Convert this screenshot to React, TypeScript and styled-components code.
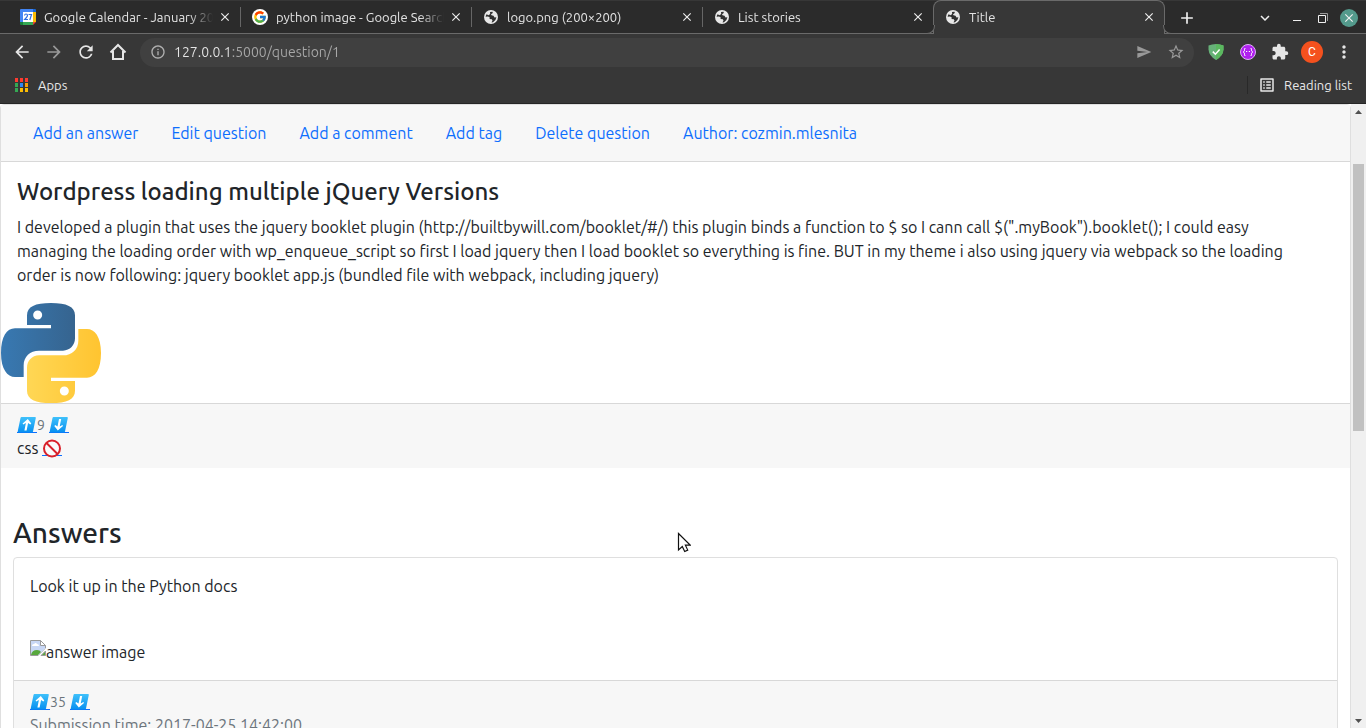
import React from "react";
import styled, { createGlobalStyle, css } from "styled-components";
import {
  MdAdd, MdArrowBack, MdArrowForward, MdClose, MdExpandMore, MdExtension, MdInfoOutline,
  MdListAlt, MdMoreVert, MdRefresh, MdSend, MdStarBorder,
} from "react-icons/md";
import { FcGoogle } from "react-icons/fc";

const GlobalStyle = createGlobalStyle`
  * { box-sizing: border-box; }
  body {
    margin: 0;
    background: #fff;
    color: #212529;
    font: 16px/24px Ubuntu, "Noto Sans", sans-serif;
  }
  button { border: 0; padding: 0; background: none; color: inherit; font: inherit; cursor: pointer; }
  h1, h2, p { margin: 0; }
  svg { display: block; flex: none; }
`;

const Window = styled.div`
  display: flex;
  flex-direction: column;
  height: 100vh;
  overflow: hidden;
`;

/* ---------- browser frame ---------- */

const TabStrip = styled.div`
  display: flex;
  flex: none;
  height: 34px;
  padding-left: 9px;
  background: #2b2b2b;
  border-top: 1px solid #373737;
  box-shadow: inset 0 -1px #6a6a6a;
  color: #e3e3e3;
  font-size: 13px;
`;

const flare = css`
  content: "";
  position: absolute;
  bottom: 0;
  width: 8px;
  height: 8px;
  background: #2b2b2b;
  border-bottom: 1px solid #6a6a6a;
`;

const Tab = styled.div<{ $active?: boolean; $first?: boolean }>`
  position: relative;
  display: flex;
  align-items: center;
  flex: 0 1 231px;
  min-width: 0;
  padding: 0 8px 2px ${({ $first }) => ($first ? 11 : 12)}px;
  ${({ $active, $first }) =>
    $active
      ? css`
          margin-top: -1px;
          flex-basis: 232px;
          padding: 0 8px 1px 11px;
          background: #373737;
          border: 1px solid #6a6a6a;
          border-bottom: 0;
          border-radius: 8px 8px 0 0;
          &::before { ${flare} left: -8px; border-right: 1px solid #6a6a6a; border-bottom-right-radius: 8px; }
          &::after { ${flare} right: -8px; border-left: 1px solid #6a6a6a; border-bottom-left-radius: 8px; }
        `
      : css`
          &::before {
            content: "";
            position: absolute;
            left: 0;
            top: 6px;
            width: 1px;
            height: 20px;
            background: ${$first ? "transparent" : "#666"};
          }
        `}
`;

const TabTitle = styled.span`
  flex: 1;
  min-width: 0;
  margin: 0 5px 0 8px;
  overflow: hidden;
  white-space: nowrap;
  mask-image: linear-gradient(to right, #000 calc(100% - 24px), transparent);
`;

const TabClose = styled.button`
  display: flex;
  color: #eee;
`;

const WindowControls = styled.div`
  display: flex;
  align-items: center;
  margin-left: auto;
  padding-right: 8px;
  color: #e3e3e3;
`;

const StripButton = styled.button<{ $width: number }>`
  display: flex;
  align-items: center;
  justify-content: center;
  width: ${({ $width }) => $width}px;
  color: #f0f0f0;
`;

const CloseWindow = styled(StripButton)`
  height: 18px;
  margin-left: 6px;
  border-radius: 9px;
  background: #549a8c;
`;

const Toolbar = styled.div`
  display: flex;
  align-items: center;
  flex: none;
  height: 36px;
  padding: 0 6px;
  background: #373737;
`;

const ToolButton = styled.button<{ $dim?: boolean }>`
  display: flex;
  align-items: center;
  justify-content: center;
  flex: none;
  width: 32px;
  height: 28px;
  color: ${({ $dim }) => ($dim ? "#999" : "#e6e6e6")};
`;

const AddressBar = styled.div`
  display: flex;
  align-items: center;
  flex: 1;
  height: 29px;
  margin: 0 6px;
  padding: 0 2px 0 10px;
  border-radius: 15px;
  background: #404040;
  color: #b0b0b0;
`;

const AddressInput = styled.input`
  flex: 1;
  min-width: 0;
  margin-left: 8px;
  padding: 0;
  border: 0;
  outline: 0;
  font: 14px/20px Ubuntu, "Noto Sans", sans-serif;
  color: transparent;
  background: linear-gradient(to right, #e6e6e6 57px, #a8a8a8 57px);
  background-clip: text;
  caret-color: #e6e6e6;
`;

const Avatar = styled.span`
  width: 22px;
  border-radius: 11px;
  background: #f4511e;
  color: #fff;
  font: 12px/22px Roboto, sans-serif;
  text-align: center;
`;

const BookmarksBar = styled.div`
  display: flex;
  align-items: center;
  justify-content: space-between;
  flex: none;
  height: 34px;
  padding: 0 14px 4px;
  background: #373737;
  border-bottom: 1px solid #262626;
  color: #e8e8e8;
  font-size: 13px;
  line-height: 16px;
`;

const Bookmark = styled.button<{ $divided?: boolean }>`
  display: flex;
  align-items: center;
  gap: 8px;
  ${({ $divided }) => $divided && "padding-left: 10px; border-left: 1px solid #292929;"}
`;

/* ---------- web page ---------- */

const Viewport = styled.div`
  display: flex;
  flex: 1;
  min-height: 0;
`;

const Page = styled.main`
  flex: 1;
  min-width: 0;
  overflow: hidden;
`;

const Card = styled.article`
  border: 1px solid #dfdfdf;
  border-radius: 4px;
  background: #fff;
`;

const CardHeader = styled.nav`
  display: flex;
  gap: 33px;
  padding: 16px 32px;
  background: #f7f7f7;
  border-bottom: 1px solid #d8d8d8;
`;

const NavLink = styled.a`
  color: #0d6efd;
  text-decoration: none;
`;

const CardBody = styled.div`
  padding: 16px;
`;

const QuestionTitle = styled.h1`
  margin-bottom: 10px;
  font-size: 24px;
  line-height: 27px;
  font-weight: 500;
`;

const QuestionText = styled.p`
  padding-right: 16px;
`;

const CardFooter = styled.div`
  padding: 8px 16px;
  background: #f7f7f7;
  border-top: 1px solid #d8d8d8;
  color: #6c757d;
`;

const VoteRow = styled.div`
  display: flex;
  align-items: center;
  padding-top: 2px;
  font-size: 14px;
  line-height: 22px;
`;

const VoteLink = styled.a<{ $spaced?: boolean }>`
  margin-left: ${({ $spaced }) => ($spaced ? 4 : 0)}px;
`;

const TagRow = styled.div`
  display: flex;
  align-items: center;
  gap: 4px;
  color: #212529;
`;

const Answers = styled.section`
  padding: 48px 12px 16px;
`;

const AnswersTitle = styled.h2`
  margin-bottom: 7px;
  font-size: 28px;
  line-height: 34px;
  font-weight: 500;
`;

const AnswerImage = styled.div`
  display: flex;
  margin-top: 42px;
`;

const Scrollbar = styled.div`
  display: flex;
  flex-direction: column;
  align-items: center;
  flex: none;
  width: 15px;
  padding: 6px 0 5px;
  background: #f0f0f0;
`;

const Thumb = styled.div`
  width: 11px;
  height: 267px;
  margin: 50px 0 auto;
  background: #c1c1c1;
`;

const Pointer = styled.svg`
  position: absolute;
  left: 677px;
  top: 532px;
`;

/* ---------- drawings ---------- */

const CalendarIcon = () => (
  <svg width="16" height="16" viewBox="0 0 16 16">
    <path d="M0 1Q0 0 1 0h12v3H3v10H0z" fill="#4285f4" />
    <path d="M13 0h2q1 0 1 1v2h-3z" fill="#1967d2" />
    <path d="M13 3h3v10h-3z" fill="#fbbc04" />
    <path d="M3 13h10v3H3z" fill="#34a853" />
    <path d="M0 13h3v3H1q-1 0-1-1z" fill="#188038" />
    <path d="M13 13h3l-3 3z" fill="#ea4335" />
    <path d="M3 3h10v10H3z" fill="#fff" />
    <path d="M4.500 6.500q.3-1.500 1.500-1.500 1.500 0 1.500 1.500Q7.500 7.500 4.700 10.500H8M8.500 5.500h3L9.800 11" fill="none" stroke="#2f6fe0" strokeWidth="1.200" />
  </svg>
);

const GlobeIcon = () => (
  <svg width="16" height="16" viewBox="0 0 16 16">
    <circle cx="8" cy="8" r="7" fill="#e8e8e8" />
    <path
      d="M7 3L9.500 2.800 9.800 4 8 5.200 8.500 6.300 10.500 6.800 11.500 8.500 13.400 8.300Q13 11.800 10 13.200L8.500 13.500 9.500 11.500 8.800 10.200 6.500 10 6.800 8.500 5 7.500 2.600 7.800Q2.800 6.200 3.600 5.200L5.500 6.200 7.200 5z"
      fill="#303030"
    />
  </svg>
);

const HomeIcon = () => (
  <svg width="18" height="18" viewBox="0 0 18 18" fill="none" stroke="#e6e6e6" strokeWidth="2">
    <path d="M1.500 9.500L9 2l7.500 7.500M4 8v8h3.500M14 8v8h-3.500M4 16h10" />
  </svg>
);

const GoogleBadge = styled.span`
  display: flex;
  padding: 1px;
  border-radius: 8px;
  background: #fff;
`;

const AppsIcon = () => {
  const colors = ["#ff3b30", "#ff3b30", "#ff3b30", "#34a853", "#2f86f6", "#fb9c04", "#34a853", "#fbbc04", "#fbbc04"];
  return (
    <svg width="16" height="16" viewBox="0 0 16 16">
      {colors.map((c, i) => (
        <rect key={i} x={1 + (i % 3) * 5} y={1 + Math.floor(i / 3) * 5} width="3" height="4" fill={c} />
      ))}
    </svg>
  );
};

const MinimizeIcon = () => (
  <svg width="10" height="12" viewBox="0 0 10 12"><path d="M1 8h8v1H1z" fill="#f0f0f0" /></svg>
);

const RestoreIcon = () => (
  <svg width="12" height="12" viewBox="0 0 12 12" fill="none">
    <path d="M1.500 3.500h7v7h-7z" stroke="#f0f0f0" />
    <path d="M3 1.500h7.500V9" stroke="#999" />
  </svg>
);

const ShieldIcon = () => (
  <svg width="16" height="16" viewBox="0 0 16 16">
    <path d="M8 0q4 0 7.500 1.500v4Q15 12 8 16 1 12 .5 5.500v-4Q4 0 8 0z" fill="#67b279" />
    <path d="M8 0q4 0 7.500 1.500v4Q15 12 8 16z" fill="#5bb85f" />
    <path d="M4.800 7.600l2.600 2.600 4.200-4.800" fill="none" stroke="#fff" strokeWidth="1.500" />
  </svg>
);

const BracesIcon = () => (
  <svg width="16" height="16" viewBox="0 0 16 16" fill="none">
    <circle cx="8" cy="8" r="7.500" fill="#b020f0" stroke="#ddb0f5" />
    <path d="M5.500 4.500h-1V7L3 8l1.500 1v2.500h1M10.500 4.500h1V7L13 8l-1.500 1v2.500h-1" stroke="#f0d8fb" />
    <path d="M6 7.500h1.200M8.800 7.500H10" stroke="#fff" />
  </svg>
);

const PythonLogo = () => {
  const half = "M153 39C105 39 81 50 81 76V105H153V115H45C20 115 3 140 3 189C3 238 22 261 45 261H71V226C71 200 90 182 117 182H189C210 182 225 165 225 145V76C225 50 200 39 153 39ZM113 61.500A13.500 13.500 0 1 1 113 88.500A13.500 13.500 0 1 1 113 61.500Z";
  return (
    <svg width="100" height="100" viewBox="3 39 300 300" role="img" aria-label="Python">
      <defs>
        <linearGradient id="blue"><stop stopColor="#3879b2" /><stop offset="1" stopColor="#36648f" /></linearGradient>
        <linearGradient id="yellow"><stop stopColor="#ffc430" /><stop offset="1" stopColor="#ffd755" /></linearGradient>
      </defs>
      <path d={half} fill="url(#blue)" />
      <path d={half} fill="url(#yellow)" transform="rotate(180 153 189)" />
    </svg>
  );
};

const ArrowEmoji = ({ down }: { down?: boolean }) => (
  <svg width="20" height="18" viewBox="0 0 20 18">
    <defs>
      <linearGradient id="sky" x2="0" y2="1"><stop stopColor="#3fc1fb" /><stop offset="1" stopColor="#078ff0" /></linearGradient>
    </defs>
    <path d="M0 16.500H20" stroke="#0d6efd" />
    <path d="M4.500 1H18q1 0 .8 1L16 15.500q-.2 1-1 1H1.500q-1 0-.8-1L3.500 2q.2-1 1-1z" fill="url(#sky)" />
    <g transform={down ? "rotate(180 9.800 8.800)" : undefined}>
      <path d="M10.800 3l3.500 4.500-1 1-2.200-1.500-1.500 7.500-2.200 0 1.500-7.500-2.700 1.500-.6-1z" fill="#fff" />
    </g>
  </svg>
);

const ProhibitedEmoji = () => (
  <svg width="20" height="20" viewBox="0 0 20 20" fill="none">
    <path d="M0 17.500H20" stroke="#0d6efd" />
    <circle cx="10" cy="10.500" r="8" fill="#fafafa" stroke="#d9202a" strokeWidth="2" />
    <path d="M4.500 5l11 11" stroke="#d9202a" strokeWidth="2" />
  </svg>
);

const BrokenImage = () => (
  <svg width="16" height="16" viewBox="0 0 16 16">
    <path d="M.5.500h10l5 5v3L8.500 15.500h-8z" fill="#c8d7f5" stroke="#9a9a9a" />
    <path d="M10.500.500v5h5z" fill="#fff" stroke="#9a9a9a" />
    <path d="M2 6q0-2 2-2 2-2 3 0 2 0 2 2z" fill="#fff" />
    <path d="M1 15q1-5 6-5 3 0 4 2l-3 3z" fill="#58a83d" />
    <path d="M16 8v2l-6 6H8z" fill="#fff" />
    <path d="M15.500 11v4.500H11z" fill="#58a83d" stroke="#9a9a9a" />
  </svg>
);

const Votes = ({ count }: { count: number }) => (
  <VoteRow>
    <VoteLink href="#up" aria-label="Vote up"><ArrowEmoji /></VoteLink>
    {count}
    <VoteLink href="#down" aria-label="Vote down" $spaced><ArrowEmoji down /></VoteLink>
  </VoteRow>
);

const tabs = [
  { title: "Google Calendar - January 2022", icon: <CalendarIcon /> },
  { title: "python image - Google Search", icon: <GoogleBadge><FcGoogle size={14} /></GoogleBadge> },
  { title: "logo.png (200×200)", icon: <GlobeIcon /> },
  { title: "List stories", icon: <GlobeIcon /> },
  { title: "Title", icon: <GlobeIcon />, active: true },
];

const links = ["Add an answer", "Edit question", "Add a comment", "Add tag", "Delete question", "Author: cozmin.mlesnita"];

export default function App() {
  return (
    <Window>
      <GlobalStyle />
      <TabStrip>
        {tabs.map((tab, i) => (
          <Tab key={tab.title} $active={tab.active} $first={i === 0}>
            {tab.icon}
            <TabTitle>{tab.title}</TabTitle>
            <TabClose aria-label={`Close ${tab.title}`}><MdClose size={14} /></TabClose>
          </Tab>
        ))}
        <StripButton $width={44} aria-label="New tab"><MdAdd size={20} /></StripButton>
        <WindowControls>
          <StripButton $width={34} aria-label="Search tabs"><MdExpandMore size={18} /></StripButton>
          <StripButton $width={30} aria-label="Minimize"><MinimizeIcon /></StripButton>
          <StripButton $width={22} aria-label="Restore"><RestoreIcon /></StripButton>
          <CloseWindow $width={18} aria-label="Close window"><MdClose size={14} /></CloseWindow>
        </WindowControls>
      </TabStrip>
      <Toolbar>
        <ToolButton aria-label="Back"><MdArrowBack size={20} /></ToolButton>
        <ToolButton aria-label="Forward" $dim><MdArrowForward size={20} /></ToolButton>
        <ToolButton aria-label="Reload"><MdRefresh size={20} /></ToolButton>
        <ToolButton aria-label="Home"><HomeIcon /></ToolButton>
        <AddressBar>
          <MdInfoOutline size={16} />
          <AddressInput aria-label="Address" defaultValue="127.0.0.1:5000/question/1" />
          <ToolButton aria-label="Send page" $dim><MdSend size={16} /></ToolButton>
          <ToolButton aria-label="Bookmark this page" $dim><MdStarBorder size={18} /></ToolButton>
        </AddressBar>
        <ToolButton aria-label="Ad blocker"><ShieldIcon /></ToolButton>
        <ToolButton aria-label="JSON viewer"><BracesIcon /></ToolButton>
        <ToolButton aria-label="Extensions"><MdExtension size={18} /></ToolButton>
        <ToolButton aria-label="Profile"><Avatar>C</Avatar></ToolButton>
        <ToolButton aria-label="Menu"><MdMoreVert size={20} /></ToolButton>
      </Toolbar>
      <BookmarksBar>
        <Bookmark><AppsIcon />Apps</Bookmark>
        <Bookmark $divided><MdListAlt size={18} />Reading list</Bookmark>
      </BookmarksBar>
      <Viewport>
        <Page>
          <Card>
            <CardHeader>
              {links.map((l) => <NavLink key={l} href="#">{l}</NavLink>)}
            </CardHeader>
            <CardBody>
              <QuestionTitle>Wordpress loading multiple jQuery Versions</QuestionTitle>
              <QuestionText>
                I developed a plugin that uses the jquery booklet plugin (http://builtbywill.com/booklet/#/) this
                plugin binds a function to $ so I cann call $(".myBook").booklet(); I could easy managing the loading
                order with wp_enqueue_script so first I load jquery then I load booklet so everything is fine. BUT in
                my theme i also using jquery via webpack so the loading order is now following: jquery booklet app.js
                (bundled file with webpack, including jquery)
              </QuestionText>
            </CardBody>
            <PythonLogo />
            <CardFooter>
              <Votes count={9} />
              <TagRow>css <a href="#remove" aria-label="Remove tag"><ProhibitedEmoji /></a></TagRow>
            </CardFooter>
            <Answers>
              <AnswersTitle>Answers</AnswersTitle>
              <Card>
                <CardBody>
                  <p>Look it up in the Python docs</p>
                  <AnswerImage><BrokenImage />answer image</AnswerImage>
                </CardBody>
                <CardFooter>
                  <Votes count={35} />
                  <p>Submission time: 2017-04-25 14:42:00</p>
                </CardFooter>
              </Card>
            </Answers>
          </Card>
        </Page>
        <Scrollbar aria-hidden="true">
          <svg width="7" height="4" viewBox="0 0 7 4"><path d="M3.500 0L7 4H0z" fill="#505050" /></svg>
          <Thumb />
          <svg width="7" height="4" viewBox="0 0 7 4"><path d="M0 0h7L3.500 4z" fill="#505050" /></svg>
        </Scrollbar>
      </Viewport>
      <Pointer width="14" height="22" viewBox="0 0 14 22" aria-hidden="true">
        <path d="M1.500 1.500v16.500l3.800-3.500 2.400 5 3-1.400-2.300-4.900h5z" fill="#fff" stroke="#111" strokeWidth="1.200" />
      </Pointer>
    </Window>
  );
}
